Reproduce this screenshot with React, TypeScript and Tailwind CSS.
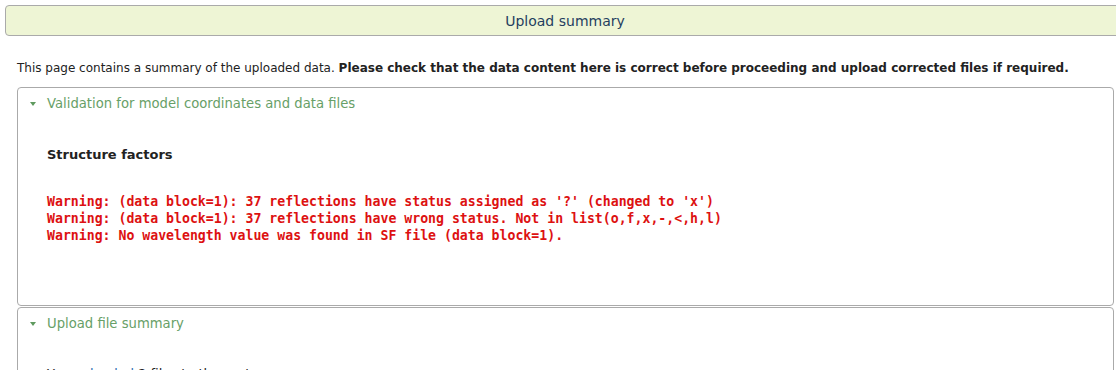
const warnings = [
  "Warning: (data block=1): 37 reflections have status assigned as '?' (changed to 'x')",
  'Warning: (data block=1): 37 reflections have wrong status. Not in list(o,f,x,-,<,h,l)',
  'Warning: No wavelength value was found in SF file (data block=1).',
];

const Caret = () => (
  <svg width="8" height="6" viewBox="0 0 8 6" className="mr-[10px]">
    <polygon points="1,1 7,1 4,5" fill="#5e9a5e" />
  </svg>
);

const App = () => {
  return (
    <div className="w-[1116px] h-[370px] overflow-hidden bg-white font-['DejaVu_Sans',sans-serif] text-[#222]">
      <div className="pt-[5px] pl-[5px]">
        <div className="w-[1120px] h-[31px] rounded-l-[4px] border border-[#aaaaaa] bg-[#eef5d5] flex items-center justify-center">
          <span className="text-[14px] leading-[20px] pt-[1px] text-[#253e60]">Upload summary</span>
        </div>
      </div>

      <p className="mt-[24px] ml-[17px] text-[12px] leading-[17px] whitespace-nowrap">
        This page contains a summary of the uploaded data.{' '}
        <b>Please check that the data content here is correct before proceeding and upload corrected files if required.</b>
      </p>

      <div className="ml-[17px] mr-[2px] mt-[10px] flex flex-col gap-[1px]">
        <div className="h-[219px] rounded-[4px] border border-[#aaaaaa] bg-white">
          <div className="flex items-center pl-[11px] h-[32px] text-[13.2px] text-[#67a067]">
            <Caret />
            Validation for model coordinates and data files
          </div>
          <div className="pl-[29px] pt-[26px]">
            <h3 className="text-[13px] font-bold leading-[18px]">Structure factors</h3>
            <div className="mt-[29px] font-['DejaVu_Sans_Mono',monospace] font-bold text-[13.2px] leading-[17px] text-[#dd1111] whitespace-pre">
              {warnings.map((w) => (
                <div key={w}>{w}</div>
              ))}
            </div>
          </div>
        </div>

        <div className="h-[120px] rounded-[4px] border border-[#aaaaaa] bg-white">
          <div className="flex items-center pl-[11px] h-[32px] text-[13.2px] text-[#67a067]">
            <Caret />
            Upload file summary
          </div>
          <div className="pl-[29px] pt-[25px] text-[13px] leading-[17px]">
            You <span className="text-[#2a6ab0]">uploaded</span> 2 files to the system
          </div>
        </div>
      </div>
    </div>
  );
};

export default App;
